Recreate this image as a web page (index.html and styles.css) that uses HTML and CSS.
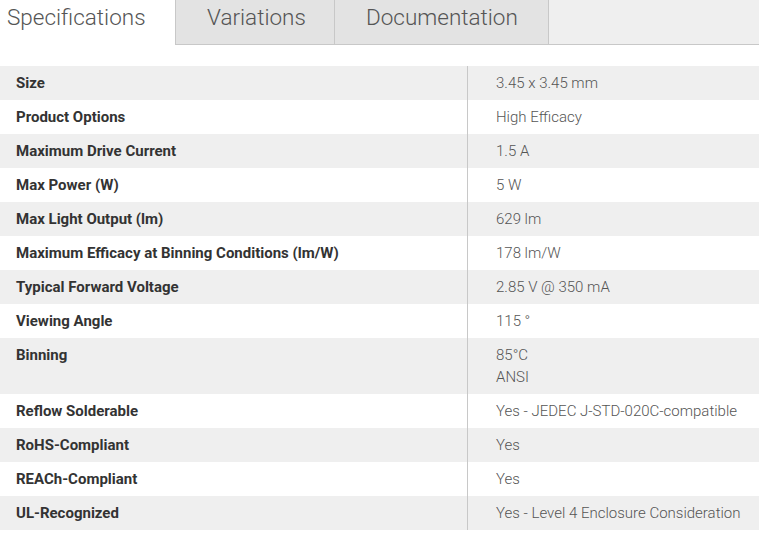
FILE: index.html
```html
<!DOCTYPE html>
<html>
<head>
<meta charset="utf-8">
<link rel="stylesheet" href="styles.css">
</head>
<body>
<div class="tabs">
  <div class="tab active">Specifications</div>
  <div class="tab tab-var">Variations</div>
  <div class="tab tab-doc">Documentation</div>
  <div class="tab-fill"></div>
</div>
<table class="specs">
  <tr><th>Size</th><td>3.45 x 3.45 mm</td></tr>
  <tr><th>Product Options</th><td>High Efficacy</td></tr>
  <tr><th>Maximum Drive Current</th><td>1.5 A</td></tr>
  <tr><th>Max Power (W)</th><td>5 W</td></tr>
  <tr><th>Max Light Output (lm)</th><td>629 lm</td></tr>
  <tr><th>Maximum Efficacy at Binning Conditions (lm/W)</th><td>178 lm/W</td></tr>
  <tr><th>Typical Forward Voltage</th><td>2.85 V @ 350 mA</td></tr>
  <tr><th>Viewing Angle</th><td>115 °</td></tr>
  <tr><th>Binning</th><td>85°C<br>ANSI</td></tr>
  <tr><th>Reflow Solderable</th><td>Yes - JEDEC J-STD-020C-compatible</td></tr>
  <tr><th>RoHS-Compliant</th><td>Yes</td></tr>
  <tr><th>REACh-Compliant</th><td>Yes</td></tr>
  <tr><th>UL-Recognized</th><td>Yes - Level 4 Enclosure Consideration</td></tr>
</table>
</body>
</html>
```
FILE: styles.css
```css
html, body {
  margin: 0;
  padding: 0;
  background: #fff;
  font-family: Roboto, "Liberation Sans", sans-serif;
}
.tabs {
  display: flex;
  height: 45px;
}
.tab {
  box-sizing: border-box;
  height: 45px;
  font-size: 22.5px;
  font-weight: 300;
  color: #555;
  line-height: 34px;
  padding: 0 0 0 31px;
  white-space: nowrap;
  background: #e3e3e3;
  border-left: 1px solid #c8c8c8;
  border-bottom: 1px solid #c8c8c8;
}
.tab-var {
  width: 159px;
}
.tab-doc {
  width: 214px;
}
.tab.active {
  background: #fff;
  border: none;
  width: 175px;
  padding: 0 0 0 7px;
}
.tab-fill {
  flex: 1;
  box-sizing: border-box;
  height: 45px;
  background: #efefef;
  border-left: 1px solid #c8c8c8;
  border-bottom: 1px solid #c8c8c8;
}
.specs {
  margin-top: 21px;
  width: 759px;
  border-collapse: collapse;
  font-size: 15px;
  line-height: 22px;
}
.specs tr:nth-child(odd) {
  background: #efefef;
}
.specs th {
  text-align: left;
  font-weight: 700;
  color: #333;
  padding: 6px 16px;
  width: 435px;
  vertical-align: top;
  border-right: 1px solid #c8c8c8;
}
.specs td {
  font-weight: 300;
  color: #555;
  padding: 6px 16px 6px 28px;
  vertical-align: top;
}
```
